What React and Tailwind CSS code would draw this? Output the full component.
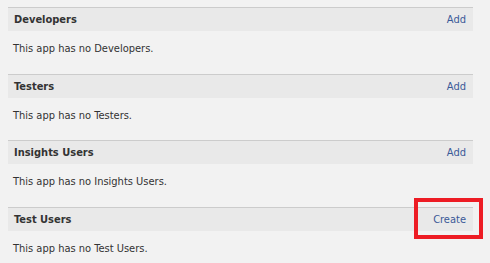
const sections = [
  { title: 'Developers', action: 'Add', empty: 'This app has no Developers.', gap: 'pb-[18px]' },
  { title: 'Testers', action: 'Add', empty: 'This app has no Testers.', gap: 'pb-[17px]' },
  { title: 'Insights Users', action: 'Add', empty: 'This app has no Insights Users.', gap: 'pb-[18px]' },
  { title: 'Test Users', action: 'Create', empty: 'This app has no Test Users.', gap: 'pb-[18px]', marked: true },
];

function Section({ title, action, empty, gap, marked }) {
  return (
    <div>
      <div className="relative flex items-center justify-between h-[24px] border-t border-[#cccccc] bg-[#e9e9e9] pt-[2px] pl-[6px] pr-[7px]">
        <span className="font-bold text-[#333333]">{title}</span>
        <a href="#" className="text-[#3b5998]">{action}</a>
        {marked && (
          <div className="absolute right-[-10px] top-[-10px] w-[69px] h-[41px] border-[4px] border-[#ed1c24]" />
        )}
      </div>
      <div className={`pl-[5px] pt-[11px] leading-[14px] text-[#333333] ${gap}`}>{empty}</div>
    </div>
  );
}

export default function App() {
  return (
    <div className="w-[490px] h-[263px] overflow-hidden bg-[#f2f2f2] pt-[7px] text-[11px] font-['Tahoma','DejaVu_Sans_Condensed','Liberation_Sans',sans-serif]">
      <div className="ml-[8px] w-[465px]">
        {sections.map(s => (
          <Section key={s.title} {...s} />
        ))}
      </div>
    </div>
  );
}
